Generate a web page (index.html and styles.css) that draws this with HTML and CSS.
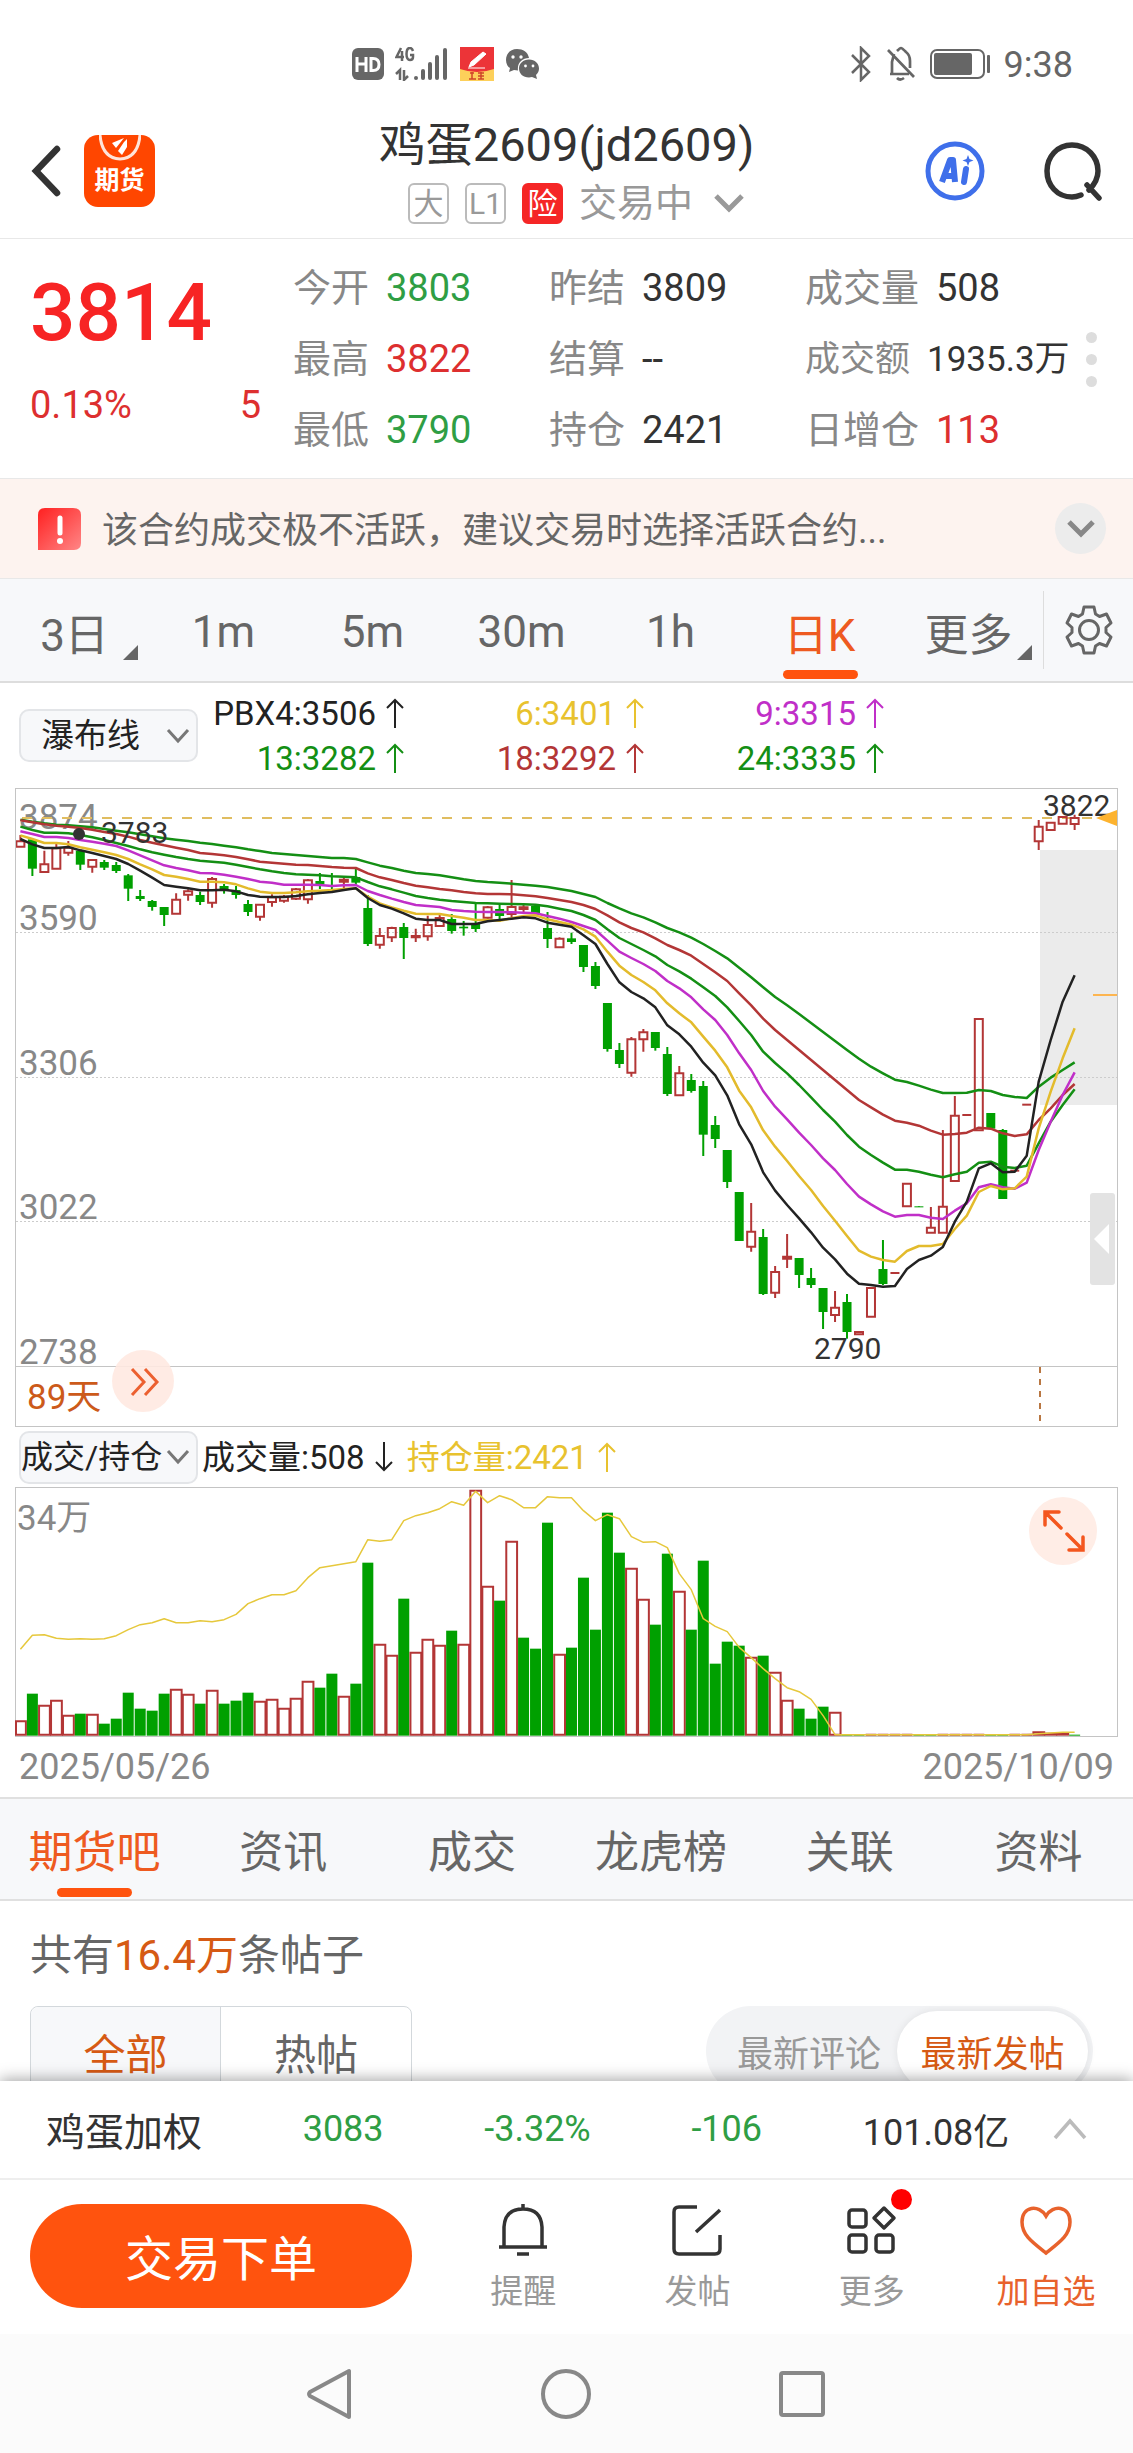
FILE: index.html
```html
<!DOCTYPE html>
<html lang="zh-CN">
<head>
<meta charset="utf-8">
<meta name="viewport" content="width=device-width, initial-scale=1">
<title>鸡蛋2609(jd2609)</title>
<link rel="stylesheet" href="styles.css">
</head>
<body>
<div class="app">
  <div class="status">
    <div class="status-group status-left">
      <svg width="32" height="34" viewBox="0 0 32 34"><rect y="1" width="32" height="32" rx="6" fill="#666"/><path d="M5 10v15M14 10v15M5 17h9M19 11.500v12h2q6 0 6-6t-6-6z" fill="none" stroke="#fff" stroke-width="3"/></svg>
      <svg width="54" height="34" viewBox="0 0 54 34"><g fill="none" stroke="#666" stroke-width="2.500"><path d="M6 1L1.500 10H9M7 4v10M18 4q-1-3-3-3-3.500 0-3.500 6t3.500 6q3 0 3-3V8h-3M1 27l4-4v10M9 23v10l4-4"/></g><g fill="#666"><rect x="19" y="29" width="4" height="4" rx="2"/><rect x="26" y="22" width="4" height="11" rx="2"/><rect x="33" y="15" width="4" height="18" rx="2"/><rect x="40" y="8" width="4" height="25" rx="2"/><rect x="48" y="1" width="4" height="32" rx="2"/></g></svg>
      <svg width="34" height="34" viewBox="0 0 34 34"><rect width="34" height="34" fill="#fdd05a"/><path d="M0 0h34v22q-17 6-34 0z" fill="#ec3438"/><path d="M9 20l2-5L23 5l3 2-12 11zM8 21h17" fill="#fff" stroke="#fff"/><path d="M10 26h4M12 25v7M9 32h7M18 26h6M18 29h6M18 32h6M21 25v7" stroke="#d0452a" stroke-width="1.500"/></svg>
      <svg width="35" height="32" viewBox="0 0 35 32"><path d="M12 1C5 1 1 6 1 12c0 4 2 7 4 8l-1 4 5-2 4 .5C12 15 17 10 24 10 23 4 18 1 12 1z" fill="#666"/><path d="M24 11.500c-6 0-10 4-10 9s4 9 10 9l3-.5 5 2-1-4c2-2 3-4 3-6.500 0-5-4-9-10-9z" fill="#666"/><g fill="#fff"><circle cx="8" cy="9" r="1.700"/><circle cx="16" cy="9" r="1.700"/><circle cx="20.500" cy="18" r="1.400"/><circle cx="28" cy="18" r="1.400"/></g></svg>
    </div>
    <div class="status-group status-right">
      <svg width="22" height="36" viewBox="0 0 22 36"><path d="M2 9l17 17-8 8V2l8 8L2 27" fill="none" stroke="#666" stroke-width="2.500"/></svg>
      <svg width="32" height="36" viewBox="0 0 32 36"><path d="M9 8L7 16v12M5 28h19M3 4l26 27M12 5q3-3 4-3t5 4q4 3 4 9v7M12 32q3 3 7 0" fill="none" stroke="#666" stroke-width="2.700"/></svg>
      <svg width="61" height="30" viewBox="0 0 61 30"><rect x="1" y="1" width="53" height="28" rx="6" fill="none" stroke="#666" stroke-width="2"/><rect x="4" y="4" width="38" height="22" rx="2" fill="#666"/><rect x="57" y="6" width="3" height="18" rx="1" fill="#666"/></svg>
      <span class="clock">9:38</span>
    </div>
  </div>

  <header class="header">
    <div class="header-side">
      <button class="icon-btn" aria-label="返回"><svg width="32" height="54" viewBox="0 0 32 54"><path d="M27 5L6 27l21 22" fill="none" stroke="#333" stroke-width="6.500" stroke-linecap="round"/></svg></button>
      <div class="logo"><svg width="42" height="26" viewBox="0 0 42 26"><path d="M1 0q2 23 20 24Q39 23 41 0" fill="none" stroke="#ffe4d9" stroke-width="3"/><path d="M13 8l12-5-8 10zM19 16l6-9 3-3v8l-5 8z" fill="#fff"/></svg><b>期货</b></div>
    </div>
    <div class="header-main">
      <h1>鸡蛋2609(jd2609)</h1>
      <div class="tags"><span class="tag">大</span><span class="tag">L1</span><span class="tag tag-risk">险</span><span>交易中</span>
        <svg class="tags-arrow" width="32" height="22" viewBox="0 0 32 22"><path d="M3 4l13 13L29 4" fill="none" stroke="#999" stroke-width="5"/></svg></div>
    </div>
    <div class="header-side header-right">
      <button class="icon-btn" aria-label="AI"><svg width="60" height="60" viewBox="0 0 60 60"><circle cx="30" cy="30" r="27" fill="none" stroke="#3f6fea" stroke-width="5"/><path d="M17 41l8-22h3l2 22M20 35h10" fill="none" stroke="#3f6fea" stroke-width="6" stroke-linejoin="round"/><path d="M41 28l-2 13" stroke="#3f6fea" stroke-width="6" stroke-linecap="round"/><path d="M43 14l1.500 4 4 1.500-4 1.500-1.500 4-1.500-4-4-1.500 4-1.500z" fill="#3f6fea"/></svg></button>
      <button class="icon-btn" aria-label="搜索"><svg width="60" height="60" viewBox="0 0 60 60"><path d="M38 54Q33 56 29 56C14 56 4 44 4 30S14 4 29 4s26 12 26 26c0 8-4 14-9 19M44 44l12 13" fill="none" stroke="#333" stroke-width="5.500" stroke-linecap="round"/></svg></button>
    </div>
  </header>

  <section class="quote">
    <div class="price">
      <strong>3814</strong>
      <div class="price-change"><span>0.13%</span><span>5</span></div>
    </div>
    <dl class="stats">
      <div><dt>今开</dt><dd class="down">3803</dd></div>
      <div><dt>昨结</dt><dd>3809</dd></div>
      <div><dt>成交量</dt><dd>508</dd></div>
      <div><dt>最高</dt><dd class="up">3822</dd></div>
      <div><dt>结算</dt><dd>--</dd></div>
      <div class="stat-small"><dt>成交额</dt><dd>1935.3万</dd></div>
      <div><dt>最低</dt><dd class="down">3790</dd></div>
      <div><dt>持仓</dt><dd>2421</dd></div>
      <div><dt>日增仓</dt><dd class="up">113</dd></div>
    </dl>
    <div class="dots"><i></i><i></i><i></i></div>
  </section>

  <section class="notice">
    <svg width="44" height="42" viewBox="0 0 44 42"><defs><linearGradient id="warn" x2="1" y2="1"><stop stop-color="#ff2020"/><stop offset="1" stop-color="#ff8686"/></linearGradient></defs><path d="M1 42V7q0-7 7-7h28q8 0 8 7v28q0 7-7 7z" fill="url(#warn)"/><path d="M23 10v15" stroke="#fff" stroke-width="5" stroke-linecap="round"/><circle cx="23" cy="33" r="3" fill="#fff"/></svg>
    <p>该合约成交极不活跃，建议交易时选择活跃合约...</p>
    <button class="round-btn" aria-label="展开"><svg width="30" height="20" viewBox="0 0 30 20"><path d="M3 3l12 12L27 3" fill="none" stroke="#888" stroke-width="5"/></svg></button>
  </section>

  <nav class="periods">
    <button class="has-menu">3日</button><button>1m</button><button>5m</button><button>30m</button><button>1h</button><button class="active">日K</button><button class="has-menu">更多</button>
    <button class="gear" aria-label="设置"><svg width="48" height="50" viewBox="0 0 48 50"><path d="M19 2h10l1.500 7 4 2.500 7-2.500 4.500 9-5 4.500v5L46 32l-4.500 9-7-2.500-4 2.500L29 48H19l-1.500-7-4-2.500-7 2.500L2 32l5-4.500v-5L2 18l4.500-9 7 2.500 4-2.500z" fill="none" stroke="#666" stroke-width="3" stroke-linejoin="round"/><circle cx="24" cy="25" r="9.500" fill="none" stroke="#666" stroke-width="3"/></svg></button>
  </nav>

  <svg class="symbols" width="0" height="0"><symbol id="arrow-up" viewBox="0 0 18 30"><path d="M9 30V2M1 10l8-8 8 8" fill="none" stroke="currentColor" stroke-width="2"/></symbol><symbol id="arrow-down" viewBox="0 0 18 30"><path d="M9 0v28M1 20l8 8 8-8" fill="none" stroke="currentColor" stroke-width="2"/></symbol><symbol id="chevron" viewBox="0 0 24 16"><path d="M2 2l10 11L22 2" fill="none" stroke="currentColor" stroke-width="3"/></symbol></svg>

  <section class="indicator">
    <div class="picker"><select aria-label="主图指标"><option>瀑布线</option></select><svg width="24" height="16"><use href="#chevron"/></svg></div>
    <div class="averages">
      <span class="c-black">PBX4:3506<svg class="arrow"><use href="#arrow-up"/></svg></span>
      <span class="c-yellow">6:3401<svg class="arrow"><use href="#arrow-up"/></svg></span>
      <span class="c-magenta">9:3315<svg class="arrow"><use href="#arrow-up"/></svg></span>
      <span class="c-green">13:3282<svg class="arrow"><use href="#arrow-up"/></svg></span>
      <span class="c-red">18:3292<svg class="arrow"><use href="#arrow-up"/></svg></span>
      <span class="c-green">24:3335<svg class="arrow"><use href="#arrow-up"/></svg></span>
    </div>
  </section>

  <figure class="chart">
    <svg viewBox="0 0 1103 639">
      <rect x="1025" y="62" width="77" height="255" fill="#ebebeb"/>
      <g class="grid"><path d="M1 144.500h1101M1 289.500h1101M1 433.500h1101"/></g>
      <path d="M1 578.500h1101" stroke="#c4c4c4"/>
      <g class="scale"><text x="4" y="41">3874</text><text x="4" y="142">3590</text><text x="4" y="287">3306</text><text x="4" y="431">3022</text><text x="4" y="576">2738</text></g>
      <path d="M7 30h1080" stroke="#e0bd60" stroke-width="2" stroke-dasharray="10 10"/>
      <g id="candles"></g>
      <g id="lines" fill="none" stroke-width="2.500" stroke-linejoin="round"></g>
      <circle cx="64" cy="46" r="6" fill="#333"/>
      <g class="marks"><text x="86" y="55">3783</text><text x="1028" y="28">3822</text><text x="799" y="571">2790</text></g>
      <path d="M1081 30l21-8v16z" fill="#fdb32f"/><path d="M1078 207h24" stroke="#fdb550" stroke-width="2"/>
      <rect x="1075" y="405" width="25" height="92" rx="3" fill="#e3e3e3"/><path d="M1079 451l15-15v30z" fill="#fff"/>
      <path d="M1025 579v54" stroke="#b97742" stroke-width="2" stroke-dasharray="6 6"/>
      <text x="12" y="621" class="days">89天</text>
      <circle cx="128" cy="593" r="31" fill="#ffe9e1" fill-opacity=".9"/>
      <path d="M117 581l12 13-12 13M130 581l12 13-12 13" fill="none" stroke="#ec6030" stroke-width="3"/>
      <rect x=".5" y=".5" width="1102" height="638" fill="none" stroke="#c4c4c4"/>
    </svg>
  </figure>

  <section class="indicator indicator-volume">
    <div class="picker picker-tight"><select aria-label="副图指标"><option>成交/持仓</option></select><svg width="24" height="16"><use href="#chevron"/></svg></div>
    <span class="c-black">成交量:508<svg class="arrow"><use href="#arrow-down"/></svg></span>
    <span class="c-yellow">持仓量:2421<svg class="arrow"><use href="#arrow-up"/></svg></span>
  </section>

  <figure class="chart">
    <svg viewBox="0 0 1103 250">
      <rect x=".5" y=".5" width="1102" height="249" fill="none" stroke="#c4c4c4"/>
      <text x="2" y="43" class="volume-max">34万</text>
      <g id="volumes"></g>
      <path id="interest" fill="none" stroke="#e6c83c" stroke-width="1.500" stroke-linejoin="round"/>
      <circle cx="1048" cy="44" r="34" fill="#ffede6"/>
      <path d="M1046 41l-15-15M1030 38V25h14M1052 47l15 15M1068 50v13h-14" fill="none" stroke="#f4561e" stroke-width="3.500" stroke-linecap="round"/>
    </svg>
    <figcaption><time>2025/05/26</time><time>2025/10/09</time></figcaption>
  </figure>

  <nav class="sections">
    <button class="active">期货吧</button><button>资讯</button><button>成交</button><button>龙虎榜</button><button>关联</button><button>资料</button>
  </nav>

  <section class="feed">
    <p>共有<em>16.4万</em>条帖子</p>
    <div class="filters">
      <div class="segments"><button class="active">全部</button><button>热帖</button></div>
      <div class="sorts"><button>最新评论</button><button class="active">最新发帖</button></div>
    </div>
  </section>

  <footer class="dock">
    <div class="index-row"><span>鸡蛋加权</span><span class="down num">3083</span><span class="down num">-3.32%</span><span class="down num">-106</span><span class="num">101.08亿</span>
      <svg width="34" height="22" viewBox="0 0 34 22"><path d="M2 20L17 3l15 17" fill="none" stroke="#bbb" stroke-width="3.500"/></svg></div>
    <div class="actions">
      <button class="trade">交易下单</button>
      <button class="action"><svg width="52" height="54" viewBox="0 0 52 54"><path d="M7 43V24Q8 6 26 6t19 18v19M2 44h48M26 1v5M20 51h12" fill="none" stroke="#333" stroke-width="3.500"/></svg>提醒</button>
      <button class="action"><svg width="52" height="54" viewBox="0 0 52 54"><path d="M26 4H8Q3 4 3 9v37q0 5 5 5h36q5 0 5-5V32M49 7L25 29" fill="none" stroke="#333" stroke-width="3.500"/></svg>发帖</button>
      <button class="action"><svg width="52" height="54" viewBox="0 0 52 54"><g fill="none" stroke="#333" stroke-width="3.500"><rect x="3" y="7" width="17" height="17" rx="3"/><rect x="3" y="32" width="17" height="17" rx="3"/><rect x="30" y="32" width="17" height="17" rx="3"/><path d="M38 5l10 10-10 10-10-10z" stroke-linejoin="round"/></g></svg><i class="badge"></i>更多</button>
      <button class="action action-fav"><svg width="52" height="54" viewBox="0 0 52 54"><path d="M26 50C12 39 2 32 2 19 2 3 19 1 26 13 33 1 50 3 50 19c0 13-10 20-24 31z" fill="none" stroke="#e8622c" stroke-width="3.500"/></svg>加自选</button>
    </div>
    <div class="sysnav">
      <svg width="48" height="54" viewBox="0 0 48 54"><path d="M43 4v46L4 29q-2-2 0-4z" fill="none" stroke="#888" stroke-width="4" stroke-linejoin="round"/></svg>
      <svg width="54" height="54" viewBox="0 0 54 54"><circle cx="27" cy="27" r="23" fill="none" stroke="#888" stroke-width="4"/></svg>
      <svg width="50" height="50" viewBox="0 0 50 50"><rect x="4" y="4" width="42" height="42" rx="2" fill="none" stroke="#888" stroke-width="4"/></svg>
    </div>
  </footer>
</div>
<script src="chart.js"></script>
</body>
</html>
```

FILE: styles.css
```css
* { box-sizing: border-box; }
body {
  margin: 0;
  background: #fff;
  color: #333;
  font-family: Roboto, "Noto Sans CJK SC", sans-serif;
}
button {
  margin: 0;
  padding: 0;
  border: 0;
  background: none;
  color: inherit;
  font: inherit;
}
svg { display: block; flex: none; }
.symbols { position: absolute; }
.app { height: 100vh; display: flex; flex-direction: column; overflow: hidden; }
.app > * { flex: none; }
.up { color: #dd2f2f; }
.down { color: #2f9e44; }
.c-black { color: #222; }
.c-yellow { color: #e8c22e; }
.c-magenta { color: #c02fc8; }
.c-green { color: #148f14; }
.c-red { color: #b33636; }

.status {
  height: 100px;
  padding: 28px 60px 0 352px;
  display: flex;
  justify-content: space-between;
  align-items: center;
}
.status-group { display: flex; align-items: center; gap: 11px; }
.status-right { gap: 13px; }
.clock { color: #666; font-size: 36px; line-height: 40px; padding-top: 2px; }

.header {
  padding: 15px 30px 14px;
  border-bottom: 1px solid #e8e8e8;
  display: grid;
  grid-template-columns: 1fr auto 1fr;
  align-items: center;
}
.header-side { display: flex; align-items: center; gap: 22px; padding-top: 3px; }
.header-right { justify-content: flex-end; gap: 58px; }
.logo {
  width: 71px;
  height: 72px;
  border-radius: 14px;
  background: #ff4600;
  color: #fff;
  font-size: 25px;
  line-height: 40px;
  display: flex;
  flex-direction: column;
  align-items: center;
}
.header-main { display: flex; flex-direction: column; align-items: center; gap: 7px; }
h1 { margin: 0; font-size: 47px; font-weight: 400; line-height: 60px; }
.tags { display: flex; align-items: center; gap: 16px; margin-left: 20px; color: #999; font-size: 38px; line-height: 42px; }
.tag {
  width: 41px;
  height: 41px;
  border: 2px solid #bbb;
  border-radius: 6px;
  font-size: 30px;
  line-height: 37px;
  text-align: center;
}
.tag-risk { border-color: #f52626; background: #f52626; color: #fff; }
.tags-arrow { margin-left: 4px; }

.quote {
  height: 240px;
  padding: 2px 36px 0 30px;
  border-bottom: 1px solid #e8e8e8;
  display: flex;
  align-items: center;
}
.price { width: 263px; padding: 0 32px 28px 0; color: #dd2f2f; }
.price strong { display: block; color: #f72424; font-size: 80px; font-weight: 500; line-height: 96px; }
.price-change { display: flex; justify-content: space-between; font-size: 38px; line-height: 44px; margin-top: 22px; }
.stats {
  flex: 1;
  margin: 0;
  display: grid;
  grid-template-columns: 256px 256px 1fr;
  font-size: 38px;
  line-height: 71px;
}
.stats div { display: flex; gap: 17px; white-space: nowrap; }
.stats dt { color: #888; }
.stats dd { margin: 0; }
.stats .stat-small { font-size: 35px; }
.dots { display: flex; flex-direction: column; gap: 11px; }
.dots i { width: 11px; height: 11px; border-radius: 50%; background: #ddd; }

.notice {
  height: 100px;
  padding: 0 27px 0 37px;
  border-bottom: 1px solid #e8e8e8;
  background: #fdf3ef;
  display: flex;
  align-items: center;
  gap: 21px;
}
.notice p { flex: 1; margin: 0; padding-top: 4px; color: #666; font-size: 36px; line-height: 50px; }
.round-btn { width: 51px; height: 51px; border-radius: 50%; background: #ececec; display: grid; place-items: center; }

.periods {
  height: 104px;
  border-bottom: 2px solid #ddd;
  background: #f7f8fa;
  display: grid;
  grid-template-columns: repeat(7, 1fr) 90px;
  color: #666;
  font-size: 44px;
}
.periods button, .sections button { position: relative; padding-top: 4px; }
.sections button { padding-top: 0; }
.active::after {
  content: "";
  position: absolute;
  left: 50%;
  bottom: 2px;
  width: 75px;
  height: 9px;
  margin-left: -37px;
  border-radius: 5px;
  background: #ff530e;
}
.periods .active, .sections .active { color: #ee5a20; }
.has-menu::before {
  content: "";
  position: absolute;
  right: 11px;
  bottom: 21px;
  border-left: 15px solid transparent;
  border-bottom: 15px solid #666;
}
.periods .gear {
  margin: 12px 0;
  padding: 0;
  border-left: 1px solid #ddd;
  display: grid;
  place-items: center;
}

.indicator { height: 105px; padding-left: 19px; display: flex; align-items: center; font-size: 33px; line-height: 45px; }
.indicator span { display: flex; align-items: center; justify-content: flex-end; gap: 10px; }
.arrow { width: 18px; height: 30px; }
.picker {
  width: 179px;
  height: 53px;
  border: 2px solid #e3e5e8;
  border-radius: 10px;
  background: #f7f8fa;
  display: grid;
  grid-template-columns: 1fr 34px;
  align-items: center;
  color: #777;
}
.picker select {
  grid-area: 1 / 1 / 2 / 3;
  appearance: none;
  width: 100%;
  height: 100%;
  margin: 0;
  padding: 0 0 0 20px;
  border: 0;
  background: none;
  color: #222;
  font: inherit;
  font-size: 33px;
}
.picker svg { grid-area: 1 / 2 / 2 / 3; margin-left: 4px; }
.picker-tight select { padding-left: 0; font-size: 32px; }
.averages { display: grid; grid-template-columns: 206px 240px 240px; }
.indicator-volume { height: 60px; }
.indicator-volume span { margin-left: 4px; }
.indicator-volume .c-yellow { margin-left: 14px; }

.chart { margin: 0 15px; }
.chart svg { width: 100%; height: auto; }
.chart text { font-size: 35px; fill: #888; }
.chart .marks text { font-size: 30px; fill: #333; }
.chart .days { fill: #cc5a1a; }
.grid path { stroke: #ccc; stroke-width: 1; stroke-dasharray: 2 2; }
.chart figcaption {
  padding: 0 4px;
  display: flex;
  justify-content: space-between;
  color: #888;
  font-size: 36px;
  line-height: 60px;
}

.sections {
  height: 104px;
  border-top: 2px solid #e0e0e0;
  border-bottom: 2px solid #e0e0e0;
  background: #f7f8fa;
  display: grid;
  grid-template-columns: repeat(6, 1fr);
  color: #666;
  font-size: 44px;
}

.app > .feed { flex: 1; min-height: 0; overflow: hidden; padding: 25px 30px 0; }
.feed p { margin: 0 0 20px; color: #666; font-size: 42px; line-height: 60px; }
.feed em { color: #d65a14; font-style: normal; }
.filters { display: flex; justify-content: space-between; padding-right: 10px; }
.segments {
  width: 382px;
  height: 90px;
  border: 1px solid #d3d8dc;
  border-radius: 8px;
  display: grid;
  grid-template-columns: 1fr 1fr;
  color: #666;
  font-size: 42px;
}
.segments .active { border-right: 1px solid #d3d8dc; border-radius: 8px 0 0 8px; background: #f7f8fa; color: #d65a14; }
.segments .active::after, .sorts .active::after { content: none; }
.sorts {
  width: 387px;
  height: 90px;
  padding: 5px;
  border-radius: 45px;
  background: #f2f3f5;
  display: grid;
  grid-template-columns: 1fr 191px;
  color: #999;
  font-size: 36px;
}
.sorts button { padding-left: 10px; }
.sorts .active { padding: 0; border-radius: 40px; background: #fff; box-shadow: 0 0 8px rgba(0, 0, 0, .08); color: #d65a14; }

.dock { position: relative; background: #fff; box-shadow: 0 -2px 14px rgba(0, 0, 0, .35); }
.index-row {
  height: 99px;
  padding: 0 46px 2px;
  border-bottom: 2px solid #eee;
  display: flex;
  align-items: center;
  justify-content: space-between;
  font-size: 39px;
}
.index-row .num { font-size: 36px; }
.index-row svg { margin-left: -57px; }
.actions { height: 154px; padding-left: 30px; display: flex; }
.trade {
  width: 382px;
  height: 104px;
  margin: 24px 24px 0 0;
  padding-bottom: 3px;
  border-radius: 52px;
  background: #ff530e;
  color: #fff;
  font-size: 48px;
}
.action {
  position: relative;
  flex: 1;
  display: flex;
  flex-direction: column;
  align-items: center;
  gap: 11px;
  padding-top: 23px;
  color: #999;
  font-size: 33px;
  line-height: 48px;
}
.action-fav { color: #e8622c; }
.badge { position: absolute; left: 50%; top: 9px; width: 21px; height: 21px; margin-left: 19px; border-radius: 50%; background: #f00; }
.sysnav {
  height: 119px;
  padding: 0 306px;
  background: #fbfbfb;
  display: flex;
  align-items: center;
  justify-content: space-between;
}
```

FILE: chart.js
```js
const STEP = 11.98;
const X = i => 5.4 + STEP * i;
const GREEN = '#00a000';
const RED = '#b33636';

// One entry per day: direction (r = up, g = down), high, body top, body bottom, low.
// Levels are thirds of a unit, measured downwards.
const candles = `r165,184,200,200 g175,178,266,288 r212,253,276,278 r190,205,266,266 r183,203,218,227 g212,212,254,270
r237,240,260,278 g240,246,263,270 g246,255,273,279 g282,286,326,363 g330,348,357,363 g360,363,381,392 g381,381,405,438
r340,359,401,401 r328,334,344,362 g335,345,366,375 r291,297,368,383 g312,318,332,341 g318,330,345,356 g360,372,396,408
r372,374,410,422 r343,352,366,380 r345,350,362,368 r324,328,356,360 r297,301,358,371 g279,303,312,327 g279,315,318,327
r292,299,305,325 g264,291,308,315 g345,384,492,498 r444,468,494,506 r440,444,472,486 g429,441,474,537 r446,468,472,486
r407,435,469,482 r405,414,438,440 g402,417,453,461 g423,440,445,467 g369,432,447,456 r378,382,413,418 g375,387,408,425
r300,381,402,411 r375,382,387,402 g372,378,399,405 g396,444,477,504 r472,476,502,502 g458,475,486,492 g495,495,561,576
g546,558,618,627 g669,669,807,815 g789,810,852,864 r771,778,878,890 r747,757,778,815 g756,756,804,812 g801,822,942,948
r858,880,946,948 g882,900,933,938 g903,918,1064,1128 g1008,1035,1077,1104 g1110,1110,1206,1224 g1236,1236,1383,1383
r1269,1355,1400,1415 g1347,1371,1542,1545 r1458,1476,1538,1554 r1362,1430,1436,1464 g1434,1434,1485,1524
g1464,1494,1515,1524 g1524,1524,1596,1647 r1533,1583,1605,1626 g1542,1566,1656,1676 r1653,1656,1663,1666
r1522,1524,1610,1610 g1380,1467,1512,1515 r1479,1479,1479,1479 r1210,1211,1279,1280 g1279,1279,1281,1281
r1281,1343,1358,1358 r1050,1280,1358,1358 r948,1007,1203,1205 r1005,1005,1005,1005 r716,717,1051,1051
g999,999,1046,1046 g1047,1050,1257,1257 r1172,1172,1172,1172 r974,974,974,974 r120,140,184,210 r126,128,150,152
r110,111,131,131 r104,114,132,150`.split(/\s+/);

const Y = v => (v - 24) / 3;
let out = '';
candles.forEach((c, i) => {
  const [hi, top, bot, lo] = c.slice(1).split(',').map(n => Y(+n));
  const x = X(i);
  if (c[0] === 'g') {
    out += `<path d="M${x} ${hi}V${lo}" stroke="${GREEN}" stroke-width="2"/><rect x="${x - 4.5}" y="${top}" width="9" height="${Math.max(bot - top, 1)}" fill="${GREEN}"/>`;
  } else if (bot - top < 1) {
    out += `<path d="M${x - 4.5} ${top}h9" stroke="${RED}" stroke-width="2"/>`;
  } else {
    const l = Math.max(x - 4, 1);
    out += `<path d="M${x} ${hi}V${top}M${x} ${bot}V${lo}M${l} ${top}H${x + 4}V${bot}H${l}z" fill="none" stroke="${RED}" stroke-width="2"/>`;
  }
});
document.getElementById('candles').innerHTML = out;

const averages = [
  ['#148f14', '119 125 130 134 136 139 142 147 152 157 163 169 175 179 183 188 192 197 202 208 213 219 222 225 228 231 234 234 237 247 257 264 272 279 282 286 292 298 303 306 308 311 314 317 321 327 333 342 351 369 385 400 412 427 444 457 473 492 513 535 563 592 622 651 676 702 729 756 783 810 836 860 880 899 906 917 929 939 939 938 930 933 945 951 954 920 893 870 847'],
  ['#b33636', '121 127 133 137 140 144 149 156 162 170 180 188 196 203 210 219 222 226 231 238 245 248 251 254 255 258 261 263 264 280 292 300 309 317 322 327 331 336 340 342 342 343 346 349 354 360 366 375 387 406 427 444 457 475 495 510 527 552 577 603 640 676 716 750 780 810 840 870 900 930 960 982 1004 1022 1028 1037 1052 1064 1062 1058 1043 1046 1060 1068 1063 1020 985 945 912'],
  ['#148f14', '140 150 158 158 160 165 172 180 189 198 208 217 224 231 237 242 245 248 254 261 268 274 279 283 284 286 289 290 292 306 319 328 338 348 354 359 363 366 369 370 371 372 373 374 379 386 393 405 420 448 474 492 510 529 555 574 596 622 648 682 723 765 815 849 880 915 952 990 1025 1065 1100 1125 1148 1169 1169 1175 1184 1192 1183 1175 1148 1145 1160 1164 1157 1090 1025 975 928'],
  ['#c02fc8', '154 162 171 171 174 180 185 191 198 211 226 241 256 264 271 279 280 284 290 297 305 308 314 314 314 315 318 316 315 333 345 356 366 375 378 381 390 393 395 396 396 397 398 400 408 416 426 438 450 482 515 534 552 573 603 625 652 688 720 765 820 870 933 980 1018 1058 1095 1135 1170 1212 1250 1273 1294 1310 1305 1305 1313 1317 1292 1270 1222 1213 1222 1226 1208 1110 1025 945 877'],
  ['#e3bb2c', '166 177 189 189 193 202 209 217 225 237 253 268 285 290 297 305 305 307 313 325 335 339 339 337 334 332 330 327 325 350 370 382 392 401 402 402 408 413 420 420 422 415 408 406 418 426 434 448 470 515 557 585 606 631 670 700 727 770 812 862 932 982 1051 1100 1143 1188 1230 1278 1322 1368 1412 1430 1440 1445 1413 1398 1398 1392 1347 1307 1236 1218 1228 1225 1190 1045 935 835 745'],
  ['#222', '177 193 204 204 201 211 219 228 237 252 272 293 315 320 325 331 331 329 334 345 350 351 351 348 343 339 336 330 325 354 375 386 400 416 420 420 432 432 432 424 420 416 412 415 428 434 440 466 492 552 607 636 655 682 736 763 800 848 886 946 1033 1093 1177 1232 1275 1315 1357 1403 1438 1481 1511 1515 1520 1518 1467 1440 1427 1401 1325 1265 1165 1150 1177 1175 1127 905 780 665 586']
];
const trace = (values, y) => 'M' + values.split(' ').map((v, i) => X(i) + ' ' + y(+v)).join('L');
document.getElementById('lines').innerHTML =
  averages.map(([color, v]) => `<path d="${trace(v, Y)}" stroke="${color}"/>`).join('');

const volumes = `r725 g642 r678 r663 r708 g702 r705 g732 g717 g639 g687 g693 g642 r630 r645 g672 r633 g672 g663 g639 r666
r660 r687 r657 r606 g624 g582 r651 g612 g249 r495 r528 g357 r519 r480 r498 g453 r495 r33 r321 g363 r186 g474 g507 g129
r525 g504 g294 g450 g99 g219 r267 r360 g435 g222 r336 g450 g243 g552 g486 g498 r534 g528 r579 r663 g687 g717 g681 r699
g765 g765 r765 r765 r765 r765 g765 g765 r765 r765 r765 r765 g765 g765 r765 r765 r758 r762 r763 g765`.split(/\s+/);
const V = v => (v - 22) / 3;
const base = V(768);
document.getElementById('volumes').innerHTML = volumes.map((b, i) => {
  const x = X(i), y = V(+b.slice(1));
  if (b[0] === 'g') return `<rect x="${x - 5.5}" y="${y}" width="11" height="${base - y}" fill="${GREEN}"/>`;
  const l = Math.max(x - 5.3, 1);
  return `<path d="M${l} ${y}H${x + 5.5}V${base - 1}H${l}z" fill="#fff" stroke="${RED}" stroke-width="2"/>`;
}).join('');
document.getElementById('interest').setAttribute('d', trace('509 467 465 476 479 477 479 477 468 450 435 429 417 429 429 423 426 420 404 372 357 345 345 333 294 264 258 252 246 180 185 180 123 108 99 87 66 77 35 69 48 60 84 84 51 54 54 93 123 105 117 171 188 186 204 282 330 417 440 456 503 534 567 597 624 636 659 708 765 765 765 765 765 765 765 765 765 765 765 765 765 765 765 765 765 762 760 758 758', V));
```
